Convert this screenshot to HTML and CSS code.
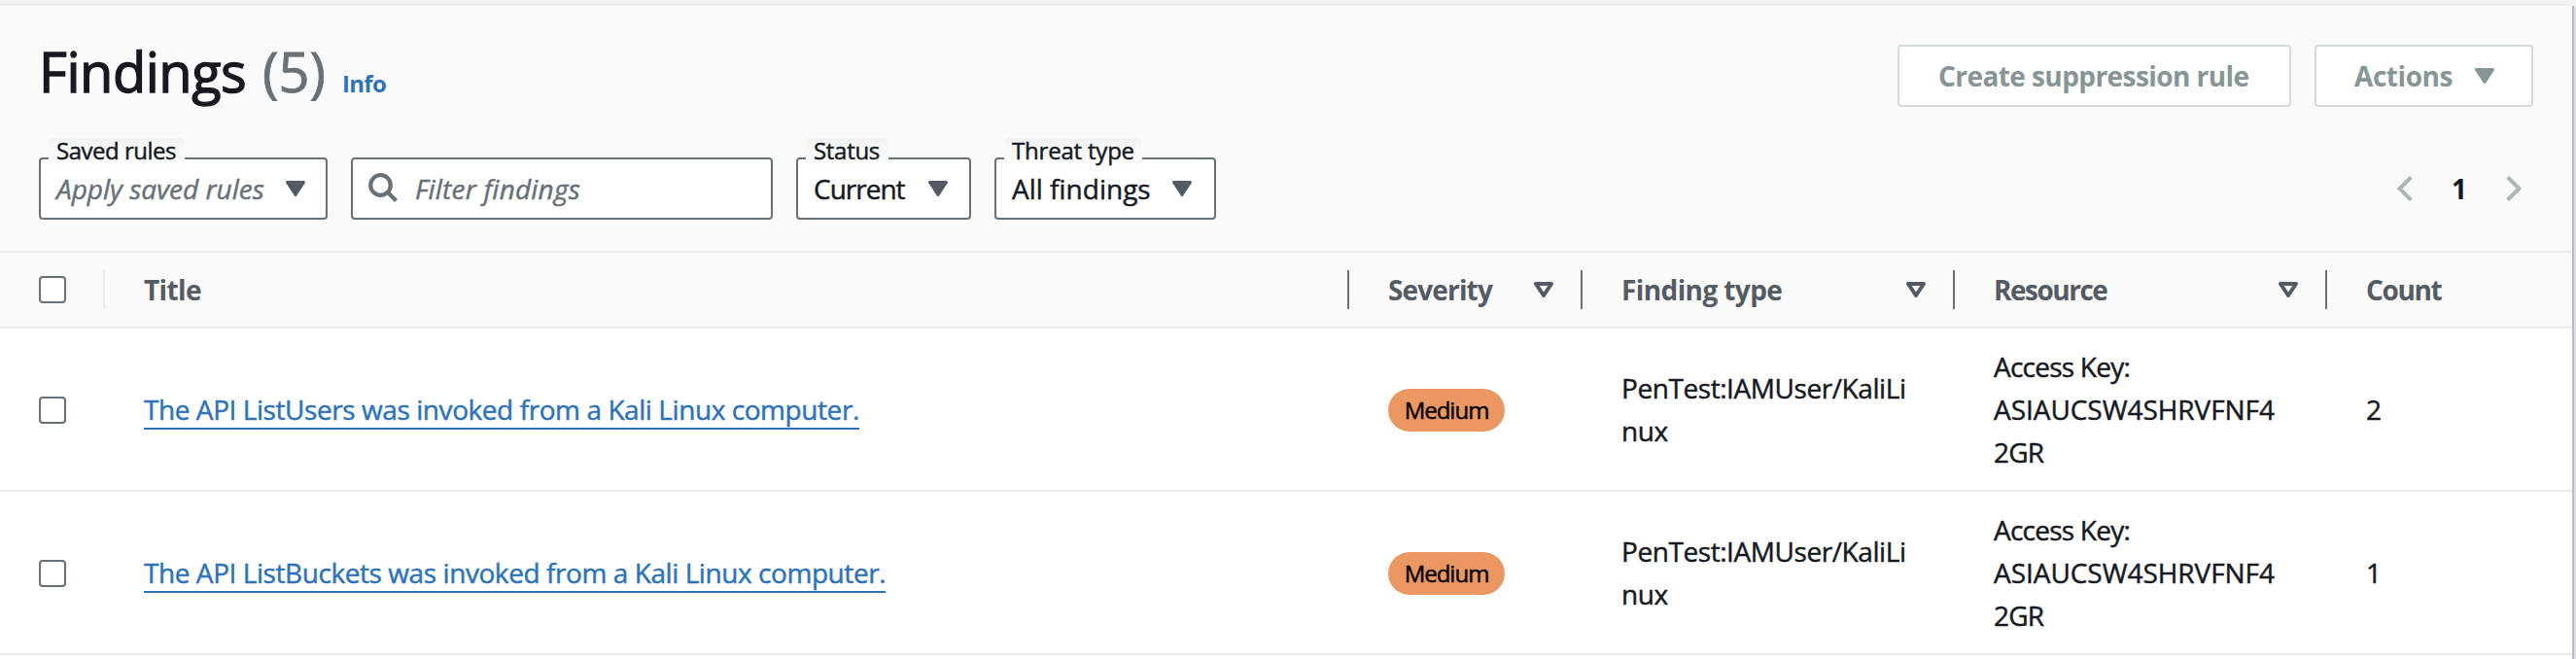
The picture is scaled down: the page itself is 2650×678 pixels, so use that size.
FILE: index.html
```
<!DOCTYPE html>
<html lang="en">
<head>
<meta charset="utf-8">
<title>Findings</title>
<link rel="stylesheet" href="styles.css">
</head>
<body>
<svg class="defs" aria-hidden="true">
  <symbol id="caret" viewBox="0 0 20 16"><path d="M1.5 1.5h17L10 14.5z" fill="currentColor" stroke="currentColor" stroke-width="3" stroke-linejoin="round"/></symbol>
  <symbol id="sort" viewBox="0 0 20 16"><path d="M2 2h16L10 14z" fill="none" stroke="currentColor" stroke-width="4" stroke-linejoin="round"/></symbol>
</svg>
<main class="panel">
  <header class="head">
    <div class="top">
      <h1 class="heading"><span class="name">Findings</span><span class="total">(5)</span><a class="info">Info</a></h1>
      <div class="actions">
        <button class="btn create"><span>Create suppression rule</span></button>
        <button class="btn menu"><span class="t-actions">Actions</span><svg class="tri"><use href="#caret"/></svg></button>
      </div>
    </div>
    <div class="filters">
      <div class="field saved"><span class="label t-saved">Saved rules</span><span class="value placeholder">Apply saved rules</span><svg class="tri"><use href="#caret"/></svg></div>
      <div class="field search"><svg class="glass" viewBox="0 0 32 32"><circle cx="12.5" cy="12.5" r="10.3"/><path d="M19.5 19.5l9 9"/></svg><span class="value placeholder t-filter">Filter findings</span></div>
      <div class="field status"><span class="label t-status">Status</span><span class="value t-current">Current</span><svg class="tri"><use href="#caret"/></svg></div>
      <div class="field threat"><span class="label t-threat">Threat type</span><span class="value">All findings</span><svg class="tri"><use href="#caret"/></svg></div>
      <nav class="pages">
        <svg class="chev" viewBox="0 0 16 26"><path d="M14.3 1.3L2.5 13l11.8 11.7"/></svg>
        <b class="page">1</b>
        <svg class="chev" viewBox="0 0 16 26"><path d="M1.7 1.3L13.5 13 1.7 24.7"/></svg>
      </nav>
    </div>
  </header>
  <section class="row thead">
    <div class="cell select"><i class="check"></i></div>
    <div class="cell"><span class="t-title">Title</span></div>
    <div class="cell"><span class="t-severity">Severity</span><svg class="tri"><use href="#sort"/></svg></div>
    <div class="cell"><span class="t-type">Finding type</span><svg class="tri"><use href="#sort"/></svg></div>
    <div class="cell"><span class="t-resource">Resource</span><svg class="tri"><use href="#sort"/></svg></div>
    <div class="cell"><span class="t-count">Count</span></div>
  </section>
  <section class="row">
    <div class="cell select"><i class="check"></i></div>
    <div class="cell"><a class="link">The API ListUsers was invoked from a Kali Linux computer.</a></div>
    <div class="cell"><span class="badge">Medium</span></div>
    <div class="cell"><span class="kind">PenTest:IAMUser/KaliLi<br>nux</span></div>
    <div class="cell"><span><span class="key">Access Key:</span><br>ASIAUCSW4SHRVFNF4<br><span class="key">2GR</span></span></div>
    <div class="cell">2</div>
  </section>
  <section class="row">
    <div class="cell select"><i class="check"></i></div>
    <div class="cell"><a class="link">The API ListBuckets was invoked from a Kali Linux computer.</a></div>
    <div class="cell"><span class="badge">Medium</span></div>
    <div class="cell"><span class="kind">PenTest:IAMUser/KaliLi<br>nux</span></div>
    <div class="cell"><span><span class="key">Access Key:</span><br>ASIAUCSW4SHRVFNF4<br><span class="key">2GR</span></span></div>
    <div class="cell">1</div>
  </section>
</main>
</body>
</html>
```
FILE: styles.css
```
* { box-sizing: border-box; }
body {
  margin: 0;
  padding-top: 4px;
  height: 678px;
  overflow: hidden;
  background: #f2f3f3;
  color: #16191f;
  font: 400 28px/44px "Open Sans", "Noto Sans", sans-serif;
  -webkit-text-stroke: 0.45px currentColor;
}
.defs { position: absolute; width: 0; height: 0; }
.panel {
  width: 2646px;
  height: 680px;
  background: #fff;
  border-top: 2px solid #eaeded;
  box-shadow: 2px 2px 0 #b6bdc0, 4px 3px 2px #d5dbdb;
}
.head {
  height: 254px;
  padding: 40px 40px 0;
  background: #fafafa;
  border-bottom: 2px solid #eaeaea;
}
.top { display: flex; justify-content: space-between; height: 116px; }
.heading {
  display: flex;
  align-items: baseline;
  margin: 0;
  height: 72px;
  font-size: 56px;
  line-height: 54px;
  font-weight: 400;
  -webkit-text-stroke-width: 1.3px;
}
.name { width: 230px; letter-spacing: -0.5px; }
.total { width: 82px; color: #687078; -webkit-text-stroke: 0.8px #687078; }
.info { color: #2e72b8; font-size: 24px; font-weight: 700; letter-spacing: -0.7px; -webkit-text-stroke: 0; }
.actions { display: flex; gap: 24px; }
.btn {
  display: flex;
  align-items: center;
  height: 64px;
  padding: 0 0 1px 40px;
  background: #fff;
  border: 2px solid #d5dbdb;
  border-radius: 4px;
  color: #879596;
  font: inherit;
  font-weight: 700;
  -webkit-text-stroke: 0;
}
.create { width: 405px; letter-spacing: -0.57px; }
.menu { width: 225px; padding-left: 39px; gap: 23px; }
.t-actions { width: 101px; letter-spacing: -0.45px; }
.tri { flex: none; width: 20px; height: 16px; }
.filters { display: flex; height: 64px; }
.field {
  position: relative;
  display: flex;
  align-items: center;
  justify-content: space-between;
  height: 64px;
  padding: 0 22px 0 16px;
  background: #fff;
  border: 2px solid #687078;
  border-radius: 4px;
  color: #545b64;
}
.label {
  position: absolute;
  left: 8px;
  top: -22px;
  height: 32px;
  padding-left: 8px;
  border-radius: 4px;
  background: linear-gradient(#f2f3f3, #fafafa 55%, #fff);
  color: #16191f;
  font-size: 24px;
  line-height: 26px;
}
.value { color: #16191f; white-space: nowrap; padding-bottom: 1px; -webkit-text-stroke-color: #16191f; }
.placeholder { color: #687078; font-style: italic; -webkit-text-stroke-color: #687078; }
.saved { width: 297px; padding-right: 21px; }
.search { width: 434px; margin-left: 24px; justify-content: flex-start; }
.status { width: 180px; margin-left: 24px; }
.threat { width: 228px; margin-left: 24px; padding-right: 23px; }
.t-saved { width: 140px; letter-spacing: -0.5px; }
.t-status { width: 85px; letter-spacing: -0.3px; }
.t-threat { width: 142px; letter-spacing: -0.2px; }
.t-current { letter-spacing: -1px; }
.t-filter { letter-spacing: 0.2px; }
.glass { width: 32px; height: 32px; margin-right: 16px; fill: none; stroke: #687078; stroke-width: 4.2; }
.pages { display: flex; align-items: center; margin-left: auto; padding-right: 12px; }
.chev { width: 16px; height: 26px; fill: none; stroke: #aab7b8; stroke-width: 4; }
.page { width: 96px; text-align: center; padding-bottom: 1px; -webkit-text-stroke: 0; }
.row {
  display: grid;
  grid-template-columns: 108px 1280px 240px 383px 383px 252px;
  height: 168px;
  border-bottom: 2px solid #eaeaea;
}
.cell { display: flex; align-items: center; padding-left: 40px; letter-spacing: -0.05px; }
.check { width: 28px; height: 28px; margin-top: 2px; border: 2px solid #687078; border-radius: 4px; background: #fff; }
.thead { height: 78px; padding: 18px 0; background: #fafafa; color: #545b64; font-weight: 700; -webkit-text-stroke: 0; }
.thead .check { margin-top: 0; }
.thead .cell { height: 40px; justify-content: space-between; padding-right: 28px; border-right: 2px solid #687078; line-height: 40px; }
.thead span { padding-bottom: 1px; }
.thead .select { border-right-color: #eaeaea; }
.thead .cell:last-child { border-right: 0; }
.t-title { letter-spacing: -0.6px; }
.t-severity { letter-spacing: -0.85px; }
.t-type { letter-spacing: -0.6px; }
.t-resource { letter-spacing: -1.5px; }
.t-count { letter-spacing: -1.4px; }
.link {
  color: #2e72b8;
  letter-spacing: -0.43px;
  height: 38px;
  line-height: 34px;
  border-bottom: 2px solid #2e72b8;
  margin-top: 4px;
  -webkit-text-stroke-color: #2e72b8;
}
.badge {
  width: 120px;
  height: 44px;
  margin-top: 2px;
  border-radius: 22px;
  background: #eb9762;
  color: #000;
  font-size: 24px;
  line-height: 43px;
  letter-spacing: -1px;
  text-align: center;
}
.kind { letter-spacing: -0.43px; }
.key { letter-spacing: -0.77px; }
```
